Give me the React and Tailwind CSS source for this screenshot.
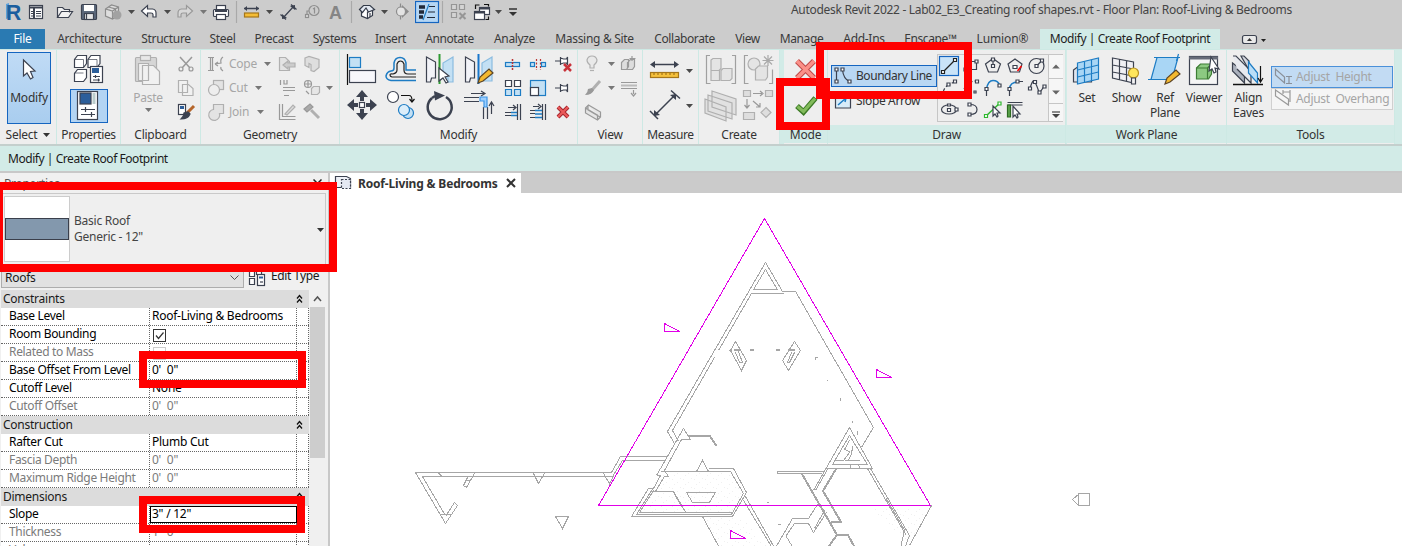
import React from "react";
import { clsx } from "clsx";

const D = "#3c4250";
const G = "#b0b0b0";
const B = "#1d7cc4";
const LB = "#c3e0f4";

/* Icon tile: `b` is the viewBox in window coordinates, drawn 1:1. */
function Ic({ b, children, className }) {
  return (
    <svg
      width={b[2]}
      height={b[3]}
      viewBox={b.join(" ")}
      className={clsx("block shrink-0", className)}
      fill="none"
      stroke={D}
      strokeWidth="1.2"
    >
      {children}
    </svg>
  );
}

function Caret({ className = "text-[#4a4a4a]" }) {
  return (
    <svg width="7" height="4" viewBox="0 0 7 4" className={clsx("block shrink-0", className)}>
      <path d="M0 0h7L3.5 4z" fill="currentColor" />
    </svg>
  );
}

function QuickAccess() {
  return (
    <div className="flex h-6 w-[530px] shrink-0">
      <Ic b={[0, 0, 25, 24]}>
        <path d="M6 4l3-1v15l-3 1z" fill="#5aa0dc" stroke="none" />
        <text x="6" y="19.5" fontSize="22" fontWeight="700" fontFamily="Liberation Sans" fill="#1b5e9e" stroke="none" textLength="15" lengthAdjust="spacingAndGlyphs">R</text>
      </Ic>
      <Ic b={[25, 0, 25, 24]}>
        <rect x="29.5" y="5.5" width="13" height="13" fill="#fff" />
        <path d="M29 7.5h14M34 8v10" strokeWidth="2" />
        <path d="M36 11.5h5M36 13.5h5M36 16h5M31 11.5h2M31 13.5h2M31 16h2" strokeWidth="1" />
      </Ic>
      <Ic b={[50, 0, 26, 24]}>
        <path d="M57.5 17.5v-10h5l2 2h5v3M57.5 17.5l4-6h11l-4 6z" fill="#f2f2f2" />
      </Ic>
      <Ic b={[76, 0, 25, 24]}>
        <rect x="81.5" y="4.500" width="15" height="15" rx="1" fill="#5d6a7d" />
        <rect x="84" y="5" width="10" height="6" fill="#fff" stroke="none" />
        <rect x="84.500" y="13.500" width="9" height="6" fill="#e8e8e8" />
        <path d="M86.500 14v5" />
      </Ic>
      <Ic b={[101, 0, 24, 24]}>
        <path d="M105.500 9l6-4 7 2v8l-6 4-7-3zM105.500 9l7 2 6-4M112.500 11v8M108.500 7l7 2v8" stroke="#8c8c8c" fill="#dedede" />
        <circle cx="117" cy="15" r="4.500" fill="#a2a2a2" stroke="none" />
      </Ic>
      <div className="flex w-3 items-center pl-[3px]"><Caret /></div>
      <Ic b={[137, 0, 24, 24]}>
        <path d="M141.500 11l6-5.500v3.500h5q3.500.5 3.500 4v4h-3v-2.500q0-1.500-2-1.500h-3.500v3.500z" fill="#fff" />
      </Ic>
      <div className="flex w-3 items-center pl-[3px]"><Caret /></div>
      <Ic b={[173, 0, 24, 24]}>
        <path d="M192.500 11l-6-5.500v3.500h-5q-3.500.5-3.500 4v4h3v-2.500q0-1.500 2-1.500h3.500v3.500z" fill="#d8d8d8" stroke="#999" />
      </Ic>
      <div className="flex w-3 items-center pl-[3px]"><Caret className="text-[#777]" /></div>
      <Ic b={[209, 0, 30, 24]}>
        <rect x="216.500" y="5.500" width="9" height="5" fill="#fff" />
        <rect x="213.500" y="9.500" width="15" height="7" rx="1" fill="#fff" />
        <rect x="216.500" y="14.500" width="9" height="5" fill="#fff" />
        <path d="M215 11h12" strokeWidth="2" />
        <path d="M236.500 1v22" stroke="#a9a9a9" />
      </Ic>
      <Ic b={[239, 0, 24, 24]}>
        <path d="M244 8.500h15" strokeWidth="1.500" />
        <path d="M247 6l-3 2.500 3 2.500zM256 6l3 2.500-3 2.500z" fill={D} stroke="none" />
        <rect x="244.500" y="13" width="14" height="4" fill="#f4bd36" stroke="#a5761a" />
      </Ic>
      <div className="flex w-3 items-center pl-[3px]"><Caret /></div>
      <Ic b={[275, 0, 26, 24]}>
        <path d="M283 18l11-12M280.500 14.500l5.500 5M291 4.500l5.500 5" />
        <path d="M282 19v-5l5 4zM295 5v5l-5-4z" fill={D} stroke="none" />
      </Ic>
      <Ic b={[301, 0, 24, 24]}>
        <circle cx="314" cy="10.500" r="5" stroke="#8f8f8f" />
        <path d="M309 11h-2v6M313 9l1.500-1v5.500" stroke="#8f8f8f" />
        <rect x="305.500" y="14.500" width="3" height="3" fill="#ddd" stroke="#8f8f8f" />
      </Ic>
      <Ic b={[325, 0, 30, 24]}>
        <text x="329" y="18.500" fontSize="18" fontWeight="700" fontFamily="Liberation Sans" fill="#858585" stroke="none">A</text>
        <path d="M351.500 1v22" stroke="#a9a9a9" />
      </Ic>
      <Ic b={[355, 0, 24, 24]}>
        <path d="M361.500 10v6l6 2.500 5-3v-6l-5-3z" fill="#fff" stroke="#333a48" />
        <path d="M359.500 9.500l4-4 6.500 0 4.500 4-6 2.500-2.500-4-3.500 4.500z" fill="#e3e9f2" stroke="#333a48" />
        <path d="M367.500 11.500v7M370 17v-4" />
      </Ic>
      <div className="flex w-3 items-center pl-[2px]"><Caret /></div>
      <Ic b={[391, 0, 24, 24]}>
        <path d="M400.500 3.500v16" stroke="#8c8c8c" />
        <path d="M402 5l7 6.500-7 6.500z" fill="#8c8c8c" stroke="none" />
        <circle cx="401" cy="11.500" r="4.500" fill="#e3e3e3" stroke="#8c8c8c" />
      </Ic>
      <Ic b={[415, 0, 30, 24]}>
        <rect x="415.500" y="1.500" width="23" height="21" fill="#b5d6f4" stroke="#1565c0" />
        <path d="M419 7h6M419 12h5M419 17h4" stroke="#222a38" strokeWidth="3.500" />
        <path d="M429 6.500h6M428 12h7M427 17.500h8" stroke="#222a38" />
        <path d="M429 4l-6 16" stroke={B} />
        <path d="M442.500 1v22" stroke="#a9a9a9" />
      </Ic>
      <Ic b={[445, 0, 25, 24]}>
        <path d="M451.500 4.500h5v5h-5zM459.500 4.500h5v5h-5zM451.500 12.500h5v5h-5z" fill="#d4d4d4" stroke="#969696" />
        <path d="M459.500 13l6 6M465.500 13l-6 6" stroke="#969696" strokeWidth="2" />
      </Ic>
      <Ic b={[470, 0, 23, 24]}>
        <rect x="479.500" y="7.500" width="10" height="7" fill="#fff" />
        <path d="M479 8.500h11" strokeWidth="2" />
        <rect x="474.500" y="11.500" width="10" height="8" fill="#fff" />
        <path d="M474 12.500h11" strokeWidth="2" />
        <path d="M475.500 9v-4h4M488.500 16.500v3h-3M484 4.500h4.500v2" stroke="#111" />
      </Ic>
      <div className="flex w-3 items-center pl-[2px]"><Caret /></div>
      <Ic b={[505, 0, 20, 24]}>
        <path d="M509 9h8" stroke="#333" strokeWidth="1.500" />
        <path d="M509 12h8l-4 4z" fill="#333" stroke="none" />
      </Ic>
    </div>
  );
}

const TABS = [
  ["Architecture", "w-[85px] tracking-[-0.35px]"],
  ["Structure", "w-[68px] tracking-[-0.3px]"],
  ["Steel", "w-[45px] tracking-[-0.3px]"],
  ["Precast", "w-[58px] tracking-[-0.35px]"],
  ["Systems", "w-[63px] tracking-[-0.4px]"],
  ["Insert", "w-[49px] tracking-[-0.4px]"],
  ["Annotate", "w-[69px] tracking-[-0.4px]"],
  ["Analyze", "w-[61px] tracking-[-0.35px]"],
  ["Massing & Site", "w-[99px] tracking-[-0.3px]"],
  ["Collaborate", "w-[81px] tracking-[-0.4px]"],
  ["View", "w-[45px] tracking-[-0.4px]"],
  ["Manage", "w-[63px] tracking-[-0.4px]"],
  ["Add-Ins", "w-[62px] tracking-[-0.3px]"],
  ["Enscape™", "w-[71px] tracking-[-0.4px]"],
  ["Lumion®", "w-[73px] tracking-[-0.1px]"],
];

function Panel({ label, className, context, children, arrow }) {
  return (
    <section className={clsx("flex h-full shrink-0 flex-col border-r border-[#cde9e4] bg-[#eeeeee]", className)}>
      <div className="flex h-[75px] overflow-hidden">{children}</div>
      <div className={clsx("flex h-[18px] items-center justify-center gap-1.5 pt-px text-[#333]", context && "bg-[#d2ebe7]")}>
        {label}
        {arrow && <Caret className="text-[#333]" />}
      </div>
    </section>
  );
}

function GeoRow({ b, text, children, caret = "w-3" }) {
  return (
    <div className="flex h-6 items-center text-[#a6a6a6]">
      <Ic b={b}>{children}</Ic>
      <span className={clsx("pl-px", caret)}>{text}</span>
      <Caret className="text-[#777]" />
    </div>
  );
}

function Modify() {
  const pin = (y) => <path d={`M555 ${y}h5M560.500 ${y - 4}v8M560.500 ${y - 3}l3 1h3l1-2v8l-1-2h-3l-3 1`} fill="#fff" />;
  return (
    <Panel label="Modify" className="w-[238px]">
      <div className="grid grid-cols-[repeat(4,39px)] content-start pl-[2px] pt-px">
        <Ic b={[342, 51, 39, 36]}>
          <path d="M347.500 54v31" stroke="#111" />
          <rect x="349.500" y="57.500" width="11" height="10" fill={LB} stroke={B} />
          <rect x="349.500" y="70.500" width="26" height="12" fill="#f7f7fb" />
        </Ic>
        <Ic b={[381, 51, 39, 36]}>
          <path d="M416 80.500h-25q-5-1-5-4.500 1-4.500 5-5 3 0 3-3v-5q1-5.500 6-5.500t6 5.500v7h10" stroke={B} strokeWidth="1.500" />
          <path d="M416 77h-24q-2-.5-2-2t3-1q4-1 4-4v-6q1-3 3.500-3t3.500 3v6q0 4 4 4h8" stroke="#222" />
        </Ic>
        <Ic b={[420, 51, 39, 36]}>
          <path d="M426.500 57l9 5v16h-4l-1 4h-4z" fill="#f2f3f8" />
          <path d="M453 57l-10 6v15h5v4h5z" fill={LB} stroke="#8bbce0" />
          <path d="M439.500 54v30" stroke="#2e9b32" strokeWidth="2" />
          <path d="M439 68l10 8-4 1 3 5-2 1-3-5-4 3z" fill="#fff" />
        </Ic>
        <Ic b={[459, 51, 39, 36]}>
          <path d="M465.500 57l9 5v16h-4l-1 4h-4z" fill="#f2f3f8" />
          <path d="M492 57l-10 6v18h10z" fill={LB} stroke="#8bbce0" />
          <path d="M478.500 54v30" stroke="#1877cc" strokeWidth="2" />
          <path d="M478 83l2-6 9-8 4 4-10 8z" fill="#f4b92f" stroke="#5c4426" />
        </Ic>
        <Ic b={[342, 87, 39, 36]}>
          <path d="M362 90l6 7h-4v4h-4v-4h-4zM362 120l6-7h-4v-4h-4v4h-4zM347 105l7-6v4h4v4h-4v4zM377 105l-7-6v4h-4v4h4v4z" fill={D} stroke="none" />
          <rect x="359.500" y="102.500" width="5" height="5" fill="#fff" />
        </Ic>
        <Ic b={[381, 87, 39, 36]}>
          <circle cx="393" cy="97" r="5.500" fill="#fff" />
          <path d="M401 95.500h8q3 0 3 5M409.500 99l2.500 3 2.500-3" stroke="#111" />
          <circle cx="408" cy="113" r="5.500" fill={LB} stroke={B} />
          <circle cx="404" cy="110" r="5.500" fill="#dceefa" stroke={B} />
        </Ic>
        <Ic b={[420, 87, 39, 36]}>
          <path d="M432 98a12 12 0 1 0 14-1" strokeWidth="2.500" />
          <path d="M434 91l11 4.500-10 5z" fill={D} stroke="none" />
          <path d="M432 98l3-2" strokeWidth="2.500" />
        </Ic>
        <Ic b={[459, 87, 39, 36]}>
          <path d="M471 93.500h13M481 91l4 2.500-4 2.500M464 97.500h15M464 101.500h15M483.500 107v12M487.500 107v12M491.500 114v-11M489 106l2.500-4 2.500 4" />
          <path d="M480 97h7v10h-3v-6h-4z" fill="#9ccfff" stroke="#3e95e5" />
        </Ic>
      </div>
      <div className="grid grid-cols-[repeat(3,25px)] content-start pl-[2px] pt-[2px]">
        <Ic b={[500, 52, 25, 24]}>
          <rect x="505.500" y="62.500" width="14" height="4" fill={LB} stroke={B} />
          <path d="M512.500 59v12" stroke="#b33" strokeDasharray="2 1" strokeWidth="1.500" />
        </Ic>
        <Ic b={[525, 52, 25, 24]}>
          <path d="M536.500 59v11M540.500 59v11" stroke="#b33" strokeDasharray="2 1.500" />
          <rect x="530.500" y="62.500" width="4" height="4" fill={LB} stroke={B} /><rect x="541.500" y="62.500" width="4" height="4" fill={LB} stroke={B} />
        </Ic>
        <Ic b={[550, 52, 25, 24]}>
          {pin(61)}
          <path d="M564 64l7 7M571 64l-7 7" stroke="#c8323a" strokeWidth="2.500" />
        </Ic>
        <Ic b={[500, 76, 25, 24]}>
          <path d="M505.500 80.500h6v6h-6zM514.500 80.500h6v6h-6z" fill="#fff" />
          <path d="M505.500 89.500h6v6h-6zM514.500 89.500h6v6h-6z" fill={LB} stroke={B} />
        </Ic>
        <Ic b={[525, 76, 25, 24]}>
          <rect x="530.500" y="80.500" width="15" height="15" fill={LB} stroke={B} />
          <rect x="530.500" y="87.500" width="8" height="8" fill="#fff" />
        </Ic>
        <Ic b={[550, 76, 25, 24]}>{pin(88)}</Ic>
        <Ic b={[500, 100, 25, 24]}>
          <path d="M508 107.500h7M513 105l3 2.500-3 2.500M505 112.500h6M505 115.500h6M517.500 104v16M520.500 104v16" />
          <path d="M511 112.500h6M511 115.500h6" stroke={B} strokeWidth="1.500" />
        </Ic>
        <Ic b={[525, 100, 25, 24]}>
          <path d="M533 106.500h6M538 104l3 2.500-3 2.500M530 110.500h5M530 113.500h5M530 117.500h5M542.500 104v16M545.500 104v16" />
          <path d="M535 110.500h7M535 114h7M535 117.500h7" stroke={B} strokeWidth="1.500" />
        </Ic>
        <Ic b={[550, 100, 25, 24]}>
          <path d="M558 107l10 10M568 107l-10 10" stroke="#a5242c" strokeWidth="4" />
          <path d="M558 107l10 10M568 107l-10 10" stroke="#ea5b5b" strokeWidth="2.200" />
        </Ic>
      </div>
    </Panel>
  );
}

const DRAW_TOOLS = [
  <><rect x="1.500" y="1.500" width="19" height="19" fill="#c9e3f8" stroke="#1565c0" /><path d="M5 17L17 5" stroke="#222" /><path d="M3.500 15.500h3v3h-3zM15.500 3.500h3v3h-3z" fill="#fff" stroke="#222" /></>,
  <><path d="M5.500 6.500h11v8h-11z" /><path d="M4 13h3v3H4zM15 5h3v3h-3z" fill="#fff" /></>,
  <><path d="M11 3.500l7.500 5.500-3 8h-9l-3-8z" /><path d="M11 4v6" /><path d="M9.500 3h3v3h-3zM9.500 9.500h3v3h-3z" fill="#fff" /></>,
  <><path d="M11 4l7 5-2.500 8h-9L4 9z" /><path d="M9 10.500h4v3H9z" fill="#fff" /><path d="M13.500 16l4-5" stroke="red" strokeWidth="1.500" /></>,
  <><circle cx="10.500" cy="11" r="7.500" /><path d="M10.500 11l5-5" /><path d="M9 9.500h3v3H9zM14.500 4h3v3h-3z" fill="#fff" /></>,
  <><path d="M5 16Q6 8 17 5" strokeDasharray="5 2" /><path d="M15.500 3h3v3h-3zM9 6h3v3H9z" fill="#fff" /></>,
  <><path d="M4 12Q7 4 17 4" strokeDasharray="5 2" /><path d="M15.500 3h3v3h-3zM14 14h2v2h-2z" fill="#fff" /></>,
  <><path d="M4.500 12Q6 3.500 11 3.500T17.500 8" stroke={B} strokeWidth="1.500" /><path d="M4.500 14v5" /><path d="M3 10.500h3v3H3zM16 7h3v3h-3z" fill="#fff" /></>,
  <><path d="M5.500 12Q6 5 14 5" stroke={B} strokeWidth="1.500" /><path d="M5.500 14v5M15 4.500h4" /><path d="M4 10.500h3v3H4zM12 3h3v3h-3z" fill="#fff" /></>,
  <><path d="M4 11Q7 1 9 5t4 10q2 0 5-6" /><path d="M2.500 10h3v3h-3zM7.500 3.500h3v3h-3zM12 14h3v3h-3zM17 8h3v3h-3z" fill="#fff" /></>,
  <><ellipse cx="11" cy="10.500" rx="7.500" ry="4.500" /><path d="M9.500 9.500h3v3h-3zM9.500 5h3v2h-3zM17 9h3v3h-3z" fill="#fff" /></>,
  <><path d="M10 5.500q7 0 7 5t-7 5" /><path d="M8 4h3v3H8zM8 14h3v3H8z" fill="#fff" /></>,
  <><path d="M4 17L18 4" stroke="#2eb82e" strokeWidth="1.500" /><path d="M2.500 15.500h3v3h-3zM16 3h3v3h-3z" fill="#fff" stroke="#2eb82e" /><path d="M11 7v10l2-2 2 3 1-1-1-3h3z" fill="#fff" /></>,
  <><path d="M3.500 3.500h15M3.500 6h15" /><path d="M3.500 6h3v12h-3z" fill="#5ba34b" stroke="#2d6b22" /><path d="M9 7v11l2-2 2 3 1-1-1-3h3z" fill="#fff" /></>,
];

function BigTool({ lines, className, children }) {
  return (
    <div className={clsx("flex shrink-0 flex-col items-center text-[#333]", className)}>
      {children}
      {lines.map((l) => <span key={l} className="leading-[15px]">{l}</span>)}
    </div>
  );
}

function Ribbon() {
  return (
    <div className="flex h-[97px] shrink-0 border-b-2 border-t border-b-[#c4cfcd] border-t-[#cde9e4] bg-[#d2ebe7]">
      <Panel label="Select" className="w-[57px]" arrow>
        <div className="ml-[7px] mt-[2px] flex h-[72px] w-11 flex-col items-center border border-[#1565c0] bg-gradient-to-b from-[#c0dbf5] to-[#a9cdef] text-[#333]">
          <Ic b={[8, 53, 42, 37]}>
            <path d="M23.500 60v16l3.500-3 3.500 6 2.500-1.500-2.500-6 4.500-.5z" fill="#fff" />
          </Ic>
          <span className="leading-[15px] tracking-[-0.2px]">Modify</span>
        </div>
      </Panel>
      <Panel label="Properties" className="w-16 tracking-[-0.4px]">
        <div className="flex flex-col items-start pl-[13px]">
          <Ic b={[70, 50, 38, 39]}>
            <path d="M77.500 55.500h9v8l-3 4h-9v-8zM91 55.500h9v8l-3 4h-9v-8zM77.500 69.500h9v8l-3 4h-9v-8z" fill="#fff" />
            <path d="M74.500 59.500h9v8M88 59.500h9v8M74.500 73h9" strokeWidth=".7" />
            <rect x="90.500" y="66.500" width="12" height="16" fill="#fff" />
            <rect x="92" y="68" width="7" height="5" fill="#2c5e9a" stroke="none" />
            <path d="M93 76.500h7M93 80h7M95.500 75v3M98.500 78.500v3" />
          </Ic>
          <div className="border border-[#1565c0] bg-[#b3d4f3]">
            <Ic b={[71, 90, 36, 32]}>
              <rect x="77.500" y="91.500" width="20" height="28" fill="#fff" />
              <rect x="80" y="93" width="11" height="11" fill="#2c5e9a" />
              <path d="M94 93v11" stroke="#bcc" strokeWidth="3" />
              <path d="M81 109.500h14M81 114.500h14M85.500 107v5M91.500 112v5" />
            </Ic>
          </div>
        </div>
      </Panel>
      <Panel label="Clipboard" className="w-20">
        <div className="flex w-[53px] flex-col items-center pl-[1px] text-[#a6a6a6]">
          <Ic b={[132, 50, 34, 39]}>
            <rect x="136.500" y="57.500" width="21" height="24" rx="1" fill="#d6d6d6" stroke={G} />
            <rect x="141.500" y="55.500" width="10" height="5" fill="#e8e8e8" stroke={G} />
            <path d="M139.500 63.500h10v17h-10zM143.500 65.500h11l6 6v13h-17z" fill="#f1f1f1" stroke={G} />
          </Ic>
          <span className="leading-[17px]">Paste</span>
          <Caret className="mt-[2px] text-[#777]" />
        </div>
        <div className="flex flex-col pt-[2px]">
          <Ic b={[174, 52, 24, 24]}>
            <path d="M180 57l10 11M192 57l-10 11" stroke="#999" strokeWidth="1.500" />
            <circle cx="181" cy="69" r="2" stroke="#999" /><circle cx="191" cy="69" r="2" stroke="#999" />
          </Ic>
          <Ic b={[174, 76, 24, 24]}>
            <path d="M178.500 80.500h9v12h-9zM182.500 84.500h6l4.500 4v7h-10.500z" fill="#f1f1f1" stroke={G} />
          </Ic>
          <Ic b={[174, 100, 24, 24]}>
            <rect x="178.500" y="104.500" width="7" height="10" fill="#fff" />
            <rect x="180" y="106" width="4" height="3" fill="#2c5e9a" stroke="none" />
            <path d="M194 106l-7 7" stroke="#b5652b" strokeWidth="3" />
            <path d="M188 112l2 2q-2 5-9 5 3-3 3-6z" fill={D} />
          </Ic>
        </div>
      </Panel>
      <Panel label="Geometry" className="w-[139px]">
        <div className="flex w-[73px] flex-col pl-[3px] pt-[2px]">
          <GeoRow b={[204, 52, 24, 24]} text="Cope" caret="w-[36px]">
            <path d="M208 57.500h6M208 70.500h6M210.500 58v12M212.500 58v12M223 57q-3 2-2 6l-6 1 3-2M215 64l3 2M223 71q-3-2-2-4" stroke="#999" />
          </GeoRow>
          <GeoRow b={[204, 76, 24, 24]} text="Cut" caret="w-[27px]">
            <rect x="213.500" y="80.500" width="10" height="9" fill="#e3e3e3" stroke={G} /><circle cx="214" cy="90" r="5.500" fill="#eee" stroke={G} />
          </GeoRow>
          <GeoRow b={[204, 100, 24, 24]} text="Join" caret="w-[29px]">
            <path d="M213.500 104.500h10v9h-4a5.500 5.500 0 1 1-6-4z" fill="#e3e3e3" stroke={G} />
          </GeoRow>
        </div>
        <div className="grid grid-cols-[26px_25px] content-start pt-[2px]">
          <Ic b={[274, 52, 26, 24]}>
            <path d="M279.500 57.500h6l4 4v9h-10z" fill="#e3e3e3" stroke={G} /><path d="M283 65l5-4v2h7v4h-7v2z" fill="#ccc" stroke={G} />
          </Ic>
          <Ic b={[300, 52, 25, 24]}>
            <path d="M305 58l4-1.500 10 3v8l-5 4-3-1v-6l-2-1v4l-4-2z" fill="#dedede" stroke={G} />
          </Ic>
          <Ic b={[274, 76, 26, 24]}>
            <path d="M283 87.500h12M283 90.500h12M280.500 80v5M284 80v4h3v-4M284 95.500h5" stroke="#999" />
          </Ic>
          <Ic b={[300, 76, 25, 24]}>
            <circle cx="308" cy="84" r="3.500" stroke="#999" /><path d="M305 84h6M308 81v6M306 91l3 3" stroke="#999" />
            <path d="M311.500 88.500l2-2h6v6l-2 2h-6z" fill="#e6e6e6" stroke={G} />
          </Ic>
          <Ic b={[274, 100, 26, 24]}>
            <path d="M279.500 104v15.500h16M282.500 104v12.500h13" stroke="#999" /><path d="M285 114l8-9 2 2-8 8z" fill="#ddd" stroke={G} />
          </Ic>
          <Ic b={[300, 100, 25, 24]}>
            <path d="M304 109l6-5 3 3-6 5z" fill="#aaa" stroke="#999" /><path d="M311 110l8 8" stroke={G} strokeWidth="3" />
          </Ic>
        </div>
        <div className="flex h-[75px] items-center pl-px"><Caret className="text-[#777]" /></div>
      </Panel>
      <Modify />
      <Panel label="View" className="w-[65px] tracking-[-0.3px]">
        <div className="grid grid-cols-[27px_10px_24px] items-center content-start pl-[2px] pt-[2px]">
          <Ic b={[580, 52, 26, 24]}>
            <path d="M590 68v-3q-3-2-3-5 1-4 5-4t5 4q0 3-3 5v3z" fill="#e9e9e9" stroke={G} /><path d="M590 70.500h4" stroke={G} />
          </Ic>
          <Caret className="ml-px text-[#777]" />
          <Ic b={[616, 52, 24, 24]}>
            <path d="M620.500 62.500l3-3h4v7l-2 3h-5zM626.500 62.500l3-3h4v7l-2 3h-5zM631 56v5M628.500 58.500h6" stroke="#999" fill="#ddd" />
          </Ic>
          <Ic b={[580, 76, 26, 24]}>
            <path d="M600 81l-8 9" stroke={G} strokeWidth="3" /><path d="M592 88l2 2q-2 5-9 5 3-3 3-6z" fill="#999" stroke="none" />
          </Ic>
          <Caret className="ml-px text-[#777]" />
          <Ic b={[616, 76, 24, 24]}>
            <path d="M620 82.500h16M620 88.500h16" stroke="#999" /><path d="M620 85.500h16" stroke="#bbb" strokeWidth="2" /><path d="M632.500 90v4M630 93l2.500 3 2.500-3" stroke="#999" />
          </Ic>
          <Ic b={[580, 100, 26, 24]}>
            <path d="M585.500 108l3-3 12 7v5l-3 3-12-7zM585.500 108l12 7v5M588 105v5l12 7" stroke="#999" fill="#e5e5e5" />
          </Ic>
        </div>
      </Panel>
      <Panel label="Measure" className="w-14 tracking-[-0.35px]">
        <div className="grid grid-cols-[43px_8px] items-center content-start pt-[3px]">
          <Ic b={[643, 53, 43, 35]}>
            <path d="M652 64.500h25" strokeWidth="1.500" /><path d="M655 61v7l-5-3.500zM674 61v7l5-3.500z" fill={D} stroke="none" />
            <rect x="650.500" y="72.500" width="28" height="5" fill="#f5c13c" stroke="#a5761a" /><path d="M654 73v2M658 73v2M662 73v2M666 73v2M670 73v2M674 73v2" stroke="#a5761a" />
          </Ic>
          <Caret />
          <Ic b={[643, 88, 43, 36]}>
            <path d="M655 115l20-20M650 111l8 8M671 90.500l9 8" strokeWidth="1.500" /><path d="M654 116v-6l6 5zM676 94v6l-6-5z" fill={D} stroke="none" />
          </Ic>
          <Caret />
        </div>
      </Panel>
      <Panel label="Create" className="w-[81px]">
        <div className="grid grid-cols-2 content-start pl-px pt-[2px]">
          <Ic b={[700, 52, 39, 36]}>
            <path d="M710 55.500h-3.500v28h4M732 55.500h3.500v28h-4" stroke="#a0a0a0" />
            <path d="M711 60l2-1.500h8v10l-2 2h-8zM711 70.500h8.500v10H711zM721 70.500l2-2h9v10l-2 2h-9z" fill="#e4e4e4" stroke={G} />
          </Ic>
          <Ic b={[739, 52, 39, 36]}>
            <path d="M748 55.500h-3.500v28h4M769 83.500h3.500v-14" stroke="#a0a0a0" />
            <circle cx="754" cy="64" r="6" fill="#e4e4e4" stroke={G} /><path d="M755.500 69l3-3h9v11l-2 3h-10z" fill="#e4e4e4" stroke={G} />
            <path d="M768 55v11M762.500 60.500h11M764 56.500l8 8M772 56.500l-8 8" stroke="#a9a9a9" />
          </Ic>
          <Ic b={[700, 88, 39, 36]}>
            <path d="M712 91l24 8v16l-24-8zM708 95l24 8v16l-24-8zM705 99l21 8v14l-21-8z" fill="#e1e1e1" stroke={G} />
          </Ic>
          <Ic b={[739, 88, 39, 36]}>
            <path d="M743.500 90.500h7v6h-7zM765.500 90.500h7v6h-7zM743.500 112.500h11v7h-11zM766 107.500l5 5-5 5-5-5z" fill="#dedede" stroke={G} />
            <path d="M753 93.500h9M760 91l3 2.500-3 2.500M747 99v8M744.500 105l2.500 3 2.500-3M753 101l7 6M760 103v4h-4" stroke="#999" />
          </Ic>
        </div>
      </Panel>
      <Panel label="Mode" context className="ml-1 w-[44px] tracking-[-0.2px]">
        <div className="flex flex-col pt-[2px]">
          <Ic b={[784, 52, 43, 36]}>
            <path d="M797 61l17 17M814 61l-17 17" stroke="#c04a48" strokeWidth="5.500" /><path d="M797 61l17 17M814 61l-17 17" stroke="#fb9088" strokeWidth="3.500" />
          </Ic>
          <Ic b={[784, 88, 43, 36]}>
            <path d="M797 106l6.500 6 12-14" stroke="#3c7a25" strokeWidth="5.500" /><path d="M797.500 106.500l6 5 11.500-13" stroke="#82bb5b" strokeWidth="3.200" />
          </Ic>
        </div>
      </Panel>
      <Panel label="Draw" context className="w-[238px]">
        <div className="w-[109px] shrink-0 pl-[3px] pt-[15px] text-[#333]">
          <div className="flex h-[22px] items-center gap-[3px] border border-[#1565c0] bg-[#b9d7f3]">
            <Ic b={[832, 66, 21, 20]}>
              <path d="M836.500 70v12M842.500 70q1 9 7 11.500" /><path d="M835 68h3v3h-3zM835 80h3v3h-3zM841 68h3v3h-3zM848 80h3v3h-3z" fill="#fff" />
            </Ic>
            <span className="whitespace-nowrap tracking-[-0.45px]">Boundary Line</span>
          </div>
          <div className="flex h-[27px] items-center gap-[3px] pl-px">
            <Ic b={[832, 90, 21, 22]}>
              <path d="M835.500 97l15-5v16h-15z" fill="#d8ecf9" /><path d="M838 105l8-7M842 97l4 1-1 4" stroke={B} strokeWidth="1.500" />
            </Ic>
            <span className="whitespace-nowrap tracking-[-0.35px]">Slope Arrow</span>
          </div>
        </div>
        <div className="mt-[4px] flex h-[68px] w-[126px] border border-[#c6c6c6]">
          <div className="grid w-[110px] grid-cols-[repeat(5,22px)] content-start">
            {DRAW_TOOLS.map((t, i) => <Ic key={i} b={[0, 0, 22, 22]}>{t}</Ic>)}
          </div>
          <div className="grid flex-1 grid-rows-[25px_26px_1fr] divide-y divide-[#c6c6c6] border-l border-[#c6c6c6] bg-[#f6f6f6]">
            <Ic b={[0, 0, 14, 24]}><path d="M3 14h8l-4-4z" fill="#666" stroke="none" /></Ic>
            <Ic b={[0, 0, 14, 24]}><path d="M3 11h8l-4 4z" fill="#666" stroke="none" /></Ic>
            <Ic b={[0, 0, 14, 14]}><path d="M3 6h8" stroke="#444" /><path d="M3 8h8l-4 4z" fill="#444" stroke="none" /></Ic>
          </div>
        </div>
      </Panel>
      <Panel label="Work Plane" context className="ml-px w-40">
        <BigTool lines={["Set"]} className="w-10">
          <Ic b={[1067, 50, 40, 40]}>
            <path d="M1073.500 70l4-3h14v15h-18z" fill="#dfe5ee" />
            <path d="M1077.500 63l21-5v21l-21 5z" fill="#a9d6f5" stroke={B} /><path d="M1084.500 61.500v21M1091.500 60v21M1077.500 70l21-5M1077.500 77l21-5" stroke={B} />
          </Ic>
        </BigTool>
        <BigTool lines={["Show"]} className="w-[39px]">
          <Ic b={[1107, 50, 39, 40]}>
            <path d="M1112.500 58l21 4v21l-21-5zM1119.500 59.500v20M1126.500 61v21M1112.500 65l21 4M1112.500 72l21 4" fill="#f0f0f4" />
            <circle cx="1133.500" cy="73" r="5" fill="#ffe65c" stroke="#b89322" /><path d="M1131.500 78h4v6h-4z" fill="#f4f4f4" />
          </Ic>
        </BigTool>
        <BigTool lines={["Ref", "Plane"]} className="w-[38px]">
          <Ic b={[1146, 50, 38, 40]}>
            <path d="M1157 57.500h21l-6 22h-21z" fill="#a9d6f5" stroke={B} /><path d="M1154 57.500h26M1178.500 54l-2 7M1148 79.500h14" stroke={B} />
            <path d="M1165 84l2-6 9-8 4 4-10 8z" fill="#f4b92f" stroke="#5c4426" />
          </Ic>
        </BigTool>
        <BigTool lines={["Viewer"]} className="w-[40px]">
          <Ic b={[1184, 50, 40, 40]}>
            <rect x="1189.500" y="56.500" width="28" height="28" fill="#f5f5f5" /><path d="M1189 58h29" strokeWidth="3" stroke="#666b78" />
            <path d="M1196.500 68l4-4h11v10l-3 5h-12z" fill="#8cc981" stroke="#3d7d34" /><path d="M1196.500 68h11v11M1207.500 68l4-4" stroke="#3d7d34" />
            <path d="M1211 57l8 12-4-1 1 4-2 1-2-4-3 2z" fill="#fff" />
          </Ic>
        </BigTool>
      </Panel>
      <Panel label="Tools" context className="w-[168px]">
        <BigTool lines={["Align", "Eaves"]} className="w-[43px]">
          <Ic b={[1227, 50, 43, 40]}>
            <path d="M1232.500 63v8l12 12v-11z" fill="#aab0bc" /><path d="M1233 56h3l15 15v12l-14-14" fill="#e7e9ef" /><path d="M1241 56h3l5 5v9z" fill="#d5d8e0" />
            <path d="M1248.500 62l9 11v10l-9-10z" fill="#b9def8" stroke={B} />
            <path d="M1233 84.500h30" stroke="#111" strokeWidth="1.500" /><path d="M1260.500 66v15M1258 78l2.500 4 2.500-4" stroke="#111" />
          </Ic>
        </BigTool>
        <div className="w-[123px] pl-px pt-4 text-[#a5a5a5]">
          <div className="flex h-[22px] items-center gap-1 border border-[#4a90d9] bg-[#c2dbf3]">
            <Ic b={[1272, 67, 20, 20]}>
              <path d="M1275.500 69v6l9 8v-6zM1286 76.500h6M1286 83.500h6M1289 77v6" stroke="#8a9099" />
            </Ic>
            <span className="whitespace-nowrap tracking-[-0.3px]">Adjust&nbsp; Height</span>
          </div>
          <div className="flex h-[22px] items-center gap-1 border border-[#d0d0d0] bg-[#f5f5f5]">
            <Ic b={[1272, 90, 20, 20]}>
              <path d="M1275.500 91v6l13 9v-6zM1283 93h7M1283 91v4M1290 91v12" stroke="#9a9a9a" />
            </Ic>
            <span className="whitespace-nowrap tracking-[-0.3px]">Adjust&nbsp; Overhang</span>
          </div>
        </div>
      </Panel>
    </div>
  );
}

function GroupHeader({ children }) {
  return (
    <div className="flex h-[18px] shrink-0 items-center justify-between bg-[#dcdcdc] pl-[2px] pr-1.5">
      {children}
      <svg width="7" height="10" viewBox="0 0 7 10" fill="none" stroke="#111" strokeWidth="1.300"><path d="M1 4.500l2.500-3 2.500 3M1 8.500l2.500-3 2.500 3" /></svg>
    </div>
  );
}

function Prop({ name, value, dim, check, edit }) {
  return (
    <div className={clsx("flex h-[18px] shrink-0 border-b border-dotted border-[#666] bg-white leading-[15px]", dim ? "text-[#7b7b7b]" : "text-black")}>
      <span className="w-[149px] whitespace-nowrap border-r border-dotted border-[#666] pl-2 tracking-[-0.33px]">{name}</span>
      <span className={clsx("w-[147px] whitespace-pre border-r border-dotted border-[#666]", edit ? "border-l border-y border-solid !border-black pl-px leading-[14px] outline outline-1 -outline-offset-1 outline-black" : "pl-[2px]")}>
        {check !== undefined && (
          <svg width="13" height="13" viewBox="0 0 13 13" className="ml-px mt-[3px]" fill="#fff" stroke={check ? "#333" : "#ccc"}>
            <rect x=".5" y=".5" width="12" height="12" />
            {check && <path d="M3 6.500l2.500 3 5-6" fill="none" strokeWidth="1.200" />}
          </svg>
        )}
        {value}
      </span>
      <span className="flex-1 border-r border-dotted border-[#666]" />
    </div>
  );
}

function Properties() {
  return (
    <aside className="flex w-[330px] shrink-0 flex-col border-r-2 border-[#c8c8c8] bg-[#f0f0f0] text-[#1a1a1a]">
      <div className="flex h-5 shrink-0 items-center justify-between pl-1 pr-1.5 text-[#555]">
        <span className="pt-0.5">Properties</span>
        <svg width="9" height="9" viewBox="0 0 9 9" stroke="#222" strokeWidth="1.500"><path d="M.5 .5l8 8M8.500 .5l-8 8" /></svg>
      </div>
      <div className="ml-0.5 flex h-[75px] w-[324px] shrink-0 items-center border border-[#c9c9c9] bg-[#efefef] pb-[3px] pl-px pr-0 text-[#444]">
        <div className="flex h-[66px] w-[66px] shrink-0 items-center border border-[#ccc] bg-white">
          <div className="h-[22px] w-full border border-[#3a3f4b] bg-[#8398ad]" />
        </div>
        <div className="flex-1 pl-1 leading-4">
          <div>Basic Roof</div>
          <div>Generic - 12"</div>
        </div>
        <Caret className="mr-px mt-px text-[#333]" />
      </div>
      <div className="flex h-[22px] shrink-0 items-end pb-[2px]">
        <div className="ml-px flex h-5 w-[243px] items-center justify-between border border-[#adadad] bg-[#e1e1e1] pl-[3px] pr-1">
          Roofs
          <svg width="9" height="6" viewBox="0 0 9 6" fill="none" stroke="#555"><path d="M.5 .5l4 4 4-4" /></svg>
        </div>
        <Ic b={[245, 267, 23, 19]}>
          <path d="M250.500 268.500h5v6h-5zM257.500 268.500h5v4h-5zM250.500 276.500h5v6h-5z" fill="#fff" />
          <rect x="258.500" y="272.500" width="7" height="11" fill="#fff" /><path d="M260 275.500h4" stroke="#2c5e9a" strokeWidth="2" /><path d="M261 280h3" />
        </Ic>
        <span className="self-start pl-[4px] leading-[16px] tracking-[-0.35px]">Edit Type</span>
      </div>
      <div className="flex min-h-0 flex-1 overflow-hidden">
        <div className="flex w-[309px] flex-col overflow-hidden pl-px">
          <GroupHeader>Constraints</GroupHeader>
          <Prop name="Base Level" value="Roof-Living & Bedrooms" />
          <Prop name="Room Bounding" check />
          <Prop name="Related to Mass" check={false} dim />
          <Prop name="Base Offset From Level" value={"0'  0\""} />
          <Prop name="Cutoff Level" value="None" />
          <Prop name="Cutoff Offset" value={"0'  0\""} dim />
          <GroupHeader>Construction</GroupHeader>
          <Prop name="Rafter Cut" value="Plumb Cut" />
          <Prop name="Fascia Depth" value={"0'  0\""} dim />
          <Prop name="Maximum Ridge Height" value={"0'  0\""} dim />
          <GroupHeader>Dimensions</GroupHeader>
          <Prop name="Slope" value={'3" / 12"'} edit />
          <Prop name="Thickness" value={"1'  0\""} dim />
          <Prop name="Volume" value="" dim />
        </div>
        <div className="ml-px w-[15px]">
          <Ic b={[0, 0, 15, 17]}><path d="M4 11l3.500-4 3.500 4" stroke="#555" strokeWidth="1.500" /></Ic>
          <div className="h-[151px] bg-[#cdcdcd]" />
        </div>
      </div>
    </aside>
  );
}

function Plan() {
  return (
    <svg width="1072" height="353" viewBox="330 193 1072 353" className="block" fill="none" stroke="#a6a6a6" shapeRendering="crispEdges">
      <defs>
        <pattern id="grain" width="11" height="9" patternUnits="userSpaceOnUse">
          <path d="M1 2h1M6 5h1M9 1h1M3 7h1" stroke="#f0f0f0" />
        </pattern>
      </defs>
      <path d="M660 472h72l13 20-14 20h-92zM702 518h40l26 28h-52zM870 507h60l-20 38z" fill="url(#grain)" stroke="none" />

      {/* upper shell */}
      <path d="M674.500 443.500L667.500 431.500L765.500 262.500L782.500 291.500H795.500L873.500 427.500L861.500 447.500" />
      <path d="M783.500 293.500H751.500L718.500 350.500M714.500 357.500L672.500 430.500L678.500 441.500" />
      <path d="M765.500 269.500L753.500 289.500H777.500Z" />
      <path d="M735.500 341.500L730.500 350.500L741.500 370.500L746.500 360.500ZM735.500 352.500l4 10h3l-4-11" />
      <path d="M794.500 341.500L800.500 350.500L788.500 370.500L782.500 360.500ZM794.500 352.500l-5 10h-2l4-10" />
      <path d="M734 350h7M788 350h7M750 350h4M776 350h4" strokeWidth="2" />
      <path d="M729 350.500h3M815.500 357v3M816 357.500h2M827 380.500h1M840 400h1M840.500 398v3M852 421v2M857 431v4M767 502.500h2M778 524.500h3" />

      {/* left wing */}
      <path d="M666.500 456.500H620.500L611.500 472.500H415.500L445.500 523.500L457.500 505.500L454.500 502.500L446 515.500M440.500 514.500h10M445 515L422.500 476.500H612.500M612.500 476.500L622.500 460.500H664.500" />
      <path d="M438 473l4 3M474.500 473.500L466.500 487.500L463.500 485.500L467.500 477.500M466 480.500h4M533.500 473.500L538.500 483.500L544.500 473.500M603.500 473.500L609.500 483.500L614 475" />
      <path d="M555.500 516.500H568.500L562.500 528.500Z" />

      {/* left room */}
      <path d="M690.500 439.500L683.500 428.500L675.500 442.500L656.500 475.500M690.500 439.500H681.500L664.500 470.500L668.500 476.500H664.500L655.500 491.500" />
      <path d="M689 436H710L716.500 446" strokeWidth="2" />
      <path d="M656.500 475.500h4L653.500 488.500H648.500L631.500 516.500H732.500L746.500 492.500L733.500 468.500H708.500" />
      <path d="M653.500 487.500L636.500 514.500H731.500L743.500 493.500L730.500 471.500H660.500M653.500 490.500L639.500 512.500H731.500" />
      <path d="M702.500 460.500L696.500 471.500H708.500ZM650.500 491.500H673.500L685.500 512M686.500 492.500H715.500L709.500 502.500H692.500ZM673.500 492.500L682.500 507.500" />
      <path d="M702.500 516.500L718.500 546M745.500 496.500L773.500 546M743.500 500.500l28 46" />

      {/* right room */}
      <path d="M777 471.500H825M777 473.500H822M777.500 471v3" />
      <path d="M802 474L837 535H848L854 546M836 469L823 491L841 522H831M837 535L829 546" strokeWidth="2" />
      <path d="M849.500 427.500L813.500 490.500M824.500 474.500V498.500M849.500 427.500L872.500 468.500H826.500M849.500 435.500L832.500 464.500H867.500Z" stroke="none" />
      <path d="M849.500 427.500L813.500 490.500M849.500 427.500L872.500 468.500H826.500M849.500 435.500L832.500 464.500H867.500Z" />
      <path d="M827.500 469.500L815.500 490.500M817.500 504.500L808.500 518.500H792.500L776.500 546" />
      <path d="M849.500 440.500L844.500 449.500L850 452L843.500 460.500H834M853 446l-2 9-3 6M845 460.500h15M850 468v-4h8l2 4" />
      <path d="M870.500 468.500L909.500 535.500L905.500 546M867.500 468.500L906 535M886 498L904.500 530L901 546M931.500 505.500L909.500 545.500M826.500 512.500L813.500 532.500L808.500 523.500H794.500L786 536L792 546M814.500 528.500L824.500 510.500" />

      {/* section marker */}
      <path d="M1078.500 493.500H1089.500V505.500H1078.500ZM1078.500 494.500L1072.500 499.500L1078.500 505.500" />

      {/* footprint sketch */}
      <g stroke="#e100e8" strokeWidth="1">
        <path d="M764.500 218.500L598.500 505.500H930.500Z" />
        <path d="M664.500 323.500V331.500H679.500ZM876.500 369.500V377.500H891.500ZM730.500 530.500V538.500H745.500Z" />
      </g>
    </svg>
  );
}

function Callout({ className }) {
  return <div className={clsx("pointer-events-none absolute border-8 border-[#ff0000]", className)} />;
}

export default function App() {
  return (
    <div className="relative flex h-[546px] w-[1402px] flex-col overflow-hidden bg-[#cccccc] font-['Noto_Sans','Open_Sans',sans-serif] text-[12px] leading-none tracking-[-0.25px]">
      <div className="flex h-[29px] shrink-0 items-start">
        <QuickAccess />
        <span className="whitespace-nowrap pl-[261px] leading-[20px] tracking-[-0.295px] text-[#444]">
          Autodesk Revit 2022 - Lab02_E3_Creating roof shapes.rvt - Floor Plan: Roof-Living &amp; Bedrooms
        </span>
      </div>
      <nav className="flex h-5 shrink-0 text-[#3a3a3a]">
        <div className="mr-[2px] flex w-[45px] items-center justify-center bg-[#2a7ab2] text-white">File</div>
        {TABS.map(([name, cls]) => (
          <div key={name} className={clsx("flex shrink-0 items-center justify-center whitespace-nowrap", cls)}>{name}</div>
        ))}
        <div className="ml-px flex w-[180px] items-center justify-center whitespace-nowrap bg-[#d2ebe7] tracking-[-0.43px] text-[#222]">Modify | Create Roof Footprint</div>
        <Ic b={[1219, 29, 60, 20]}>
          <rect x="1241.500" y="35.500" width="14" height="8" rx="2" fill="#e9e9e9" /><path d="M1246 41h5l-2.500-3z" fill="#333" stroke="none" />
          <path d="M1260 39h5l-2.500 3z" fill="#222" stroke="none" />
        </Ic>
      </nav>
      <Ribbon />
      <div className="flex h-[27px] shrink-0 items-center border-b-2 border-[#c8c8c8] bg-[#d2ebe7] pl-2 tracking-[-0.45px] text-[#1a1a1a]">
        Modify | Create Roof Footprint
      </div>
      <div className="flex min-h-0 flex-1 bg-white">
        <Properties />
        <main className="flex flex-1 flex-col">
          <div className="flex h-5 shrink-0 bg-[#cbcbcb]">
            <div className="flex w-[191px] items-center bg-white text-[#333]">
              <Ic b={[330, 173, 28, 20]}>
                <path d="M335.500 176.500h11l4 2v9h-15z" fill="#f0f2f8" /><path d="M341.500 179.500h9v9h-9z" strokeDasharray="2 1.500" fill="#e4e8f2" />
              </Ic>
              <span className="whitespace-nowrap pt-0.5 font-bold tracking-[-0.17px]">Roof-Living &amp; Bedrooms</span>
              <svg width="10" height="10" viewBox="0 0 10 10" className="ml-2" stroke="#333" strokeWidth="2"><path d="M1 1l8 8M9 1l-8 8" /></svg>
            </div>
          </div>
          <Plan />
        </main>
      </div>
      <Callout className="left-[-5px] top-[182px] h-[90px] w-[342px]" />
      <Callout className="left-[139px] top-[351px] h-[37px] w-[167px]" />
      <Callout className="left-[139px] top-[496px] h-[37px] w-[166px]" />
      <Callout className="left-[816px] top-[42px] h-[57px] w-[156px]" />
      <Callout className="left-[776px] top-[78px] h-[52px] w-[54px]" />
    </div>
  );
}
